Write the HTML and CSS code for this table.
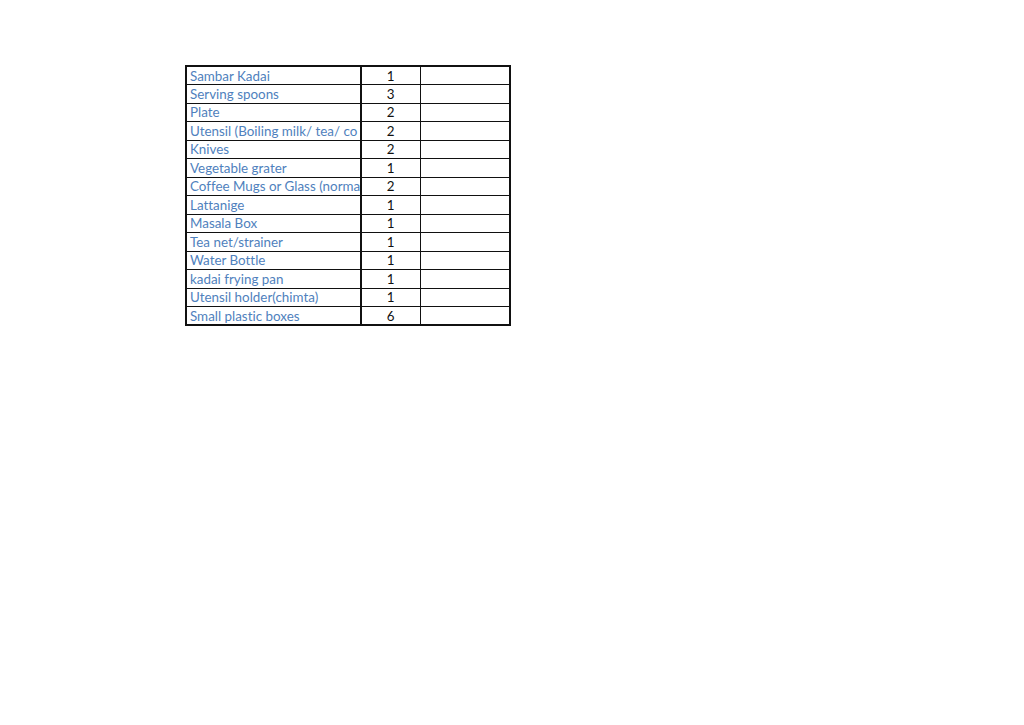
FILE: index.html
```html
<!DOCTYPE html>
<html>
<head>
<meta charset="utf-8">
<link rel="stylesheet" href="styles.css">
</head>
<body>
<div class="page">
<table class="sheet">
<colgroup><col class="c1"><col class="c2"><col class="c3"></colgroup>
<tbody>
<tr><td class="name"><div>Sambar Kadai</div></td><td class="qty">1</td><td></td></tr>
<tr><td class="name"><div>Serving spoons</div></td><td class="qty">3</td><td></td></tr>
<tr><td class="name"><div>Plate</div></td><td class="qty">2</td><td></td></tr>
<tr><td class="name"><div>Utensil (Boiling milk/ tea/ co</div></td><td class="qty">2</td><td></td></tr>
<tr><td class="name"><div>Knives</div></td><td class="qty">2</td><td></td></tr>
<tr><td class="name"><div>Vegetable grater</div></td><td class="qty">1</td><td></td></tr>
<tr><td class="name"><div>Coffee Mugs or Glass (norma</div></td><td class="qty">2</td><td></td></tr>
<tr><td class="name"><div>Lattanige</div></td><td class="qty">1</td><td></td></tr>
<tr><td class="name"><div>Masala Box</div></td><td class="qty">1</td><td></td></tr>
<tr><td class="name"><div>Tea net/strainer</div></td><td class="qty">1</td><td></td></tr>
<tr><td class="name"><div>Water Bottle</div></td><td class="qty">1</td><td></td></tr>
<tr><td class="name"><div>kadai frying pan</div></td><td class="qty">1</td><td></td></tr>
<tr><td class="name"><div>Utensil holder(chimta)</div></td><td class="qty">1</td><td></td></tr>
<tr><td class="name"><div>Small plastic boxes</div></td><td class="qty">6</td><td></td></tr>
</tbody>
</table>
</div>
</body>
</html>
```
FILE: styles.css
```css
html, body {
  margin: 0;
  padding: 0;
  background: #ffffff;
}
.page {
  width: 1024px;
  height: 725px;
  padding: 65px 0 0 185px;
  box-sizing: border-box;
}
.sheet {
  border-collapse: collapse;
  table-layout: fixed;
  width: 324px;
  border: 2px solid #111;
  font-family: Lato, "Open Sans", "Liberation Sans", sans-serif;
  font-size: 13.4px;
  font-variant-ligatures: none;
}
.c1 { width: 175px; }
.c2 { width: 59px; }
.c3 { width: 90px; }
.sheet td {
  border: 1px solid #111;
  height: 18.5px;
  padding: 0;
  box-sizing: border-box;
  line-height: 16px;
  vertical-align: middle;
}
.sheet td.name div {
  color: #4f81bd;
  white-space: nowrap;
  overflow: hidden;
  padding-left: 3px;
}
.sheet td.name {
  border-right: 2px solid #111;
}
.sheet td.qty {
  color: #111;
  text-align: center;
}
```
